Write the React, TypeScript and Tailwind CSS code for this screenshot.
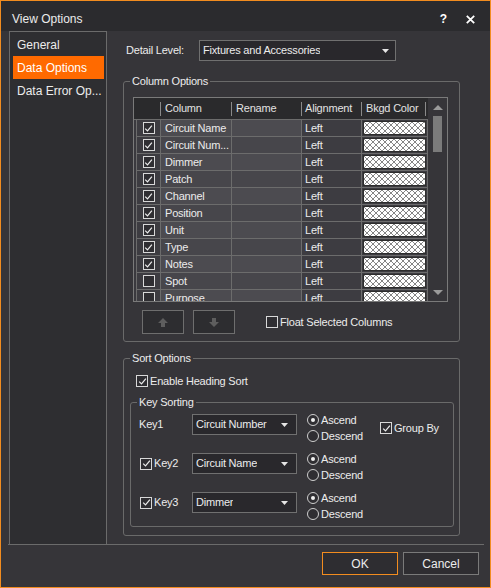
import React from "react";

function Check({ checked }: { checked: boolean }) {
  return (
    <span className="flex h-[12px] w-[12px] shrink-0 items-center justify-center border border-[#d8d8d8] bg-[#2f2e32]">
      {checked && (
        <svg width="9" height="9" viewBox="0 0 9 9">
          <path d="M1.2 4.6L3.5 6.9L7.9 1.6" fill="none" stroke="#ececec" strokeWidth="1.2" />
        </svg>
      )}
    </span>
  );
}

function Radio({ on }: { on: boolean }) {
  return (
    <span className="flex h-[12px] w-[12px] shrink-0 items-center justify-center rounded-full border border-[#cfcfcf] bg-[#2f2e32]">
      {on && <span className="h-[4px] w-[4px] rounded-full bg-[#f0f0f0]" />}
    </span>
  );
}

function Caret() {
  return (
    <svg width="7" height="4" viewBox="0 0 7 4" className="ml-auto shrink-0">
      <path d="M0 0H7L3.5 4Z" fill="#e6e6e6" />
    </svg>
  );
}

function Select({ text, className }: { text: string; className: string }) {
  return (
    <div className={className}>
      <span className="truncate">{text}</span>
      <Caret />
    </div>
  );
}

function Group({ label, className, children }: { label: string; className: string; children: React.ReactNode }) {
  return (
    <div className={className}>
      <span className="absolute left-[6px] top-[-8px] bg-[#363539] px-[2px] leading-[14px]">{label}</span>
      {children}
    </div>
  );
}

function Pattern({ id }: { id: string }) {
  return (
    <svg width="61" height="12" className="block">
      <defs>
        <pattern id={id} width="6" height="6" patternUnits="userSpaceOnUse">
          <rect width="6" height="6" fill="#ffffff" />
          <path d="M0 0L6 6M6 0L0 6" stroke="#858585" strokeWidth="1" />
        </pattern>
      </defs>
      <rect width="61" height="12" fill={`url(#${id})`} />
    </svg>
  );
}

const rows: [string, boolean][] = [
  ["Circuit Name", true],
  ["Circuit Num...", true],
  ["Dimmer", true],
  ["Patch", true],
  ["Channel", true],
  ["Position", true],
  ["Unit", true],
  ["Type", true],
  ["Notes", true],
  ["Spot", false],
  ["Purpose", false],
];

function KeyRow({ label, check, sel, groupBy }: { label: string; check: boolean; sel: string; groupBy?: boolean }) {
  return (
    <div className="flex h-[39px] items-start">
      <div className="mt-[2px] flex h-[21px] w-[61px] items-center gap-[2px] pl-[8px]">
        {check && (
          <span className="ml-[1px]">
            <Check checked />
          </span>
        )}
        <span>{label}</span>
      </div>
      <Select
        text={sel}
        className="mt-[2px] flex h-[21px] w-[105px] items-center border border-[#707070] bg-[#29282c] pl-[3px] pr-[8px]"
      />
      <div className="ml-[10px] flex w-[63px] flex-col">
        <div className="flex h-[16px] items-center gap-[2px]">
          <Radio on />
          <span>Ascend</span>
        </div>
        <div className="flex h-[16px] items-center gap-[2px]">
          <Radio on={false} />
          <span>Descend</span>
        </div>
      </div>
      {groupBy && (
        <div className="ml-[10px] flex h-[32px] items-center gap-[2px]">
          <Check checked />
          <span>Group By</span>
        </div>
      )}
    </div>
  );
}

export default function App() {
  return (
    <div className="h-[588px] w-[491px] overflow-hidden border border-[#f28c1f] bg-[#363539] font-['Liberation_Sans',Arial,sans-serif] text-[#ececec]">
      {/* title bar */}
      <div className="flex h-[30px] items-center bg-[#2b2b2e] pl-[11px] pr-[15px] pt-[6px] text-[12px]">
        <span>View Options</span>
        <span className="ml-auto font-bold text-white">?</span>
        <svg width="9" height="9" viewBox="0 0 9 9" className="ml-[19px]">
          <path d="M0.8 0.8L8.2 8.2M8.2 0.8L0.8 8.2" stroke="#ffffff" strokeWidth="1.8" />
        </svg>
      </div>

      {/* body */}
      <div className="flex h-[513px]">
        <nav className="ml-[8px] w-[98px] border-x border-t border-[#6b6b6b] bg-[#2e2e31] pl-[3px] pr-[2px] pt-[1px] text-[12px]">
          <div className="flex h-[23px] items-center pl-[4px]">General</div>
          <div className="flex h-[23px] items-center bg-[#ff6a00] pl-[4px] text-white">Data Options</div>
          <div className="flex h-[23px] items-center pl-[4px]">Data Error Op...</div>
        </nav>

        <div className="ml-[16px] w-[337px] text-[11px] tracking-[-0.2px]">
          <div className="mt-[9px] flex items-center">
            <span className="w-[76px] pl-[3px]">Detail Level:</span>
            <Select
              text="Fixtures and Accessories"
              className="flex h-[21px] w-[197px] items-center border border-[#707070] bg-[#29282c] pl-[3px] pr-[6px]"
            />
          </div>

          <Group label="Column Options" className="relative mt-[20px] h-[261px] rounded-[3px] border border-[#6a6a6a]">
            <div className="ml-[9px] mt-[15px] flex h-[205px] w-[315px] border border-[#7a7a7a] bg-[#363539]">
              <div className="w-[294px] overflow-hidden">
                <div className="flex h-[21px] items-center bg-[#2a2a2c] text-[#e2e2e2]">
                  <div className="flex h-full w-[27px] items-center justify-end">
                    <span className="h-[14px] w-px bg-[#8a8a8a]" />
                  </div>
                  <div className="flex h-full w-[71px] items-center pl-[4px]">
                    <span>Column</span>
                    <span className="ml-auto h-[14px] w-px bg-[#8a8a8a]" />
                  </div>
                  <div className="flex h-full w-[70px] items-center pl-[4px]">
                    <span>Rename</span>
                    <span className="ml-auto h-[14px] w-px bg-[#8a8a8a]" />
                  </div>
                  <div className="flex h-full w-[60px] items-center pl-[3px]">
                    <span>Alignment</span>
                    <span className="ml-auto h-[14px] w-px bg-[#8a8a8a]" />
                  </div>
                  <div className="flex h-full w-[66px] items-center pl-[4px]">
                    <span>Bkgd Color</span>
                    <span className="ml-auto mr-[2px] h-[14px] w-px bg-[#8a8a8a]" />
                  </div>
                </div>
                <div className="h-px bg-[#6c6c6c]" />
                {rows.map(([name, on], i) => (
                  <div key={name} className="flex h-[17px] bg-[#3a393e]">
                    <div className="w-[2px]" />
                    <div className="flex w-[25px] items-center justify-center border-x border-b border-[#6c6c6c] bg-[#3d3c41]">
                      <Check checked={on} />
                    </div>
                    <div
                      className={
                        i % 2 === 0
                          ? "flex w-[71px] items-center truncate border-b border-r border-[#6c6c6c] bg-[#4c4b50] pl-[4px]"
                          : "flex w-[71px] items-center truncate border-b border-r border-[#6c6c6c] bg-[#47464b] pl-[4px]"
                      }
                    >
                      {name}
                    </div>
                    <div
                      className={
                        i % 2 === 0
                          ? "w-[70px] border-b border-r border-[#6c6c6c] bg-[#4c4b50]"
                          : "w-[70px] border-b border-r border-[#6c6c6c] bg-[#47464b]"
                      }
                    />
                    <div className="flex w-[60px] items-center border-b border-r border-[#6c6c6c] bg-[#3d3c41] pl-[3px]">
                      Left
                    </div>
                    <div className="flex w-[66px] items-center border-b border-r border-[#6c6c6c] bg-[#3d3c41] pl-[1px]">
                      <div className="border border-[#2c2c2c]">
                        <Pattern id={`pat${i}`} />
                      </div>
                    </div>
                  </div>
                ))}
              </div>
              <div className="flex w-[19px] flex-col items-center pt-[7px]">
                <svg width="10" height="5" viewBox="0 0 10 5">
                  <path d="M0 5L5 0L10 5Z" fill="#9a9a9a" />
                </svg>
                <div className="mt-[6px] h-[36px] w-[9px] bg-[#7b7b7b]" />
                <svg width="10" height="5" viewBox="0 0 10 5" className="mb-[6px] mt-auto">
                  <path d="M0 0L5 5L10 0Z" fill="#9a9a9a" />
                </svg>
              </div>
            </div>

            <div className="ml-[18px] mt-[8px] flex items-center">
              <div className="flex h-[24px] w-[42px] items-center justify-center border border-[#6e6e6e] bg-[#2d2d30]">
                <svg width="10" height="9" viewBox="0 0 10 9">
                  <path d="M5 0L10 5H7V9H3V5H0Z" fill="#5e5e5e" />
                </svg>
              </div>
              <div className="ml-[9px] flex h-[24px] w-[42px] items-center justify-center border border-[#6e6e6e] bg-[#2d2d30]">
                <svg width="10" height="9" viewBox="0 0 10 9">
                  <path d="M3 0H7V4H10L5 9L0 4H3Z" fill="#5e5e5e" />
                </svg>
              </div>
              <div className="ml-[31px] flex items-center gap-[2px]">
                <Check checked={false} />
                <span>Float Selected Columns</span>
              </div>
            </div>
          </Group>

          <Group label="Sort Options" className="relative mt-[16px] h-[178px] rounded-[3px] border border-[#6a6a6a]">
            <div className="ml-[12px] mt-[14px] flex h-[16px] items-center gap-[2px]">
              <Check checked />
              <span>Enable Heading Sort</span>
            </div>
            <Group
              label="Key Sorting"
              className="relative ml-[6px] mt-[13px] h-[125px] w-[324px] rounded-[3px] border border-[#6a6a6a] pt-[9px]"
            >
              <KeyRow label="Key1" check={false} sel="Circuit Number" groupBy />
              <KeyRow label="Key2" check sel="Circuit Name" />
              <KeyRow label="Key3" check sel="Dimmer" />
            </Group>
          </Group>
        </div>
      </div>

      <div className="ml-[7px] h-px w-[476px] bg-[#6b6b6b]" />

      <div className="mt-[7px] flex justify-end gap-[5px] pr-[11px] text-[12px]">
        <div className="flex h-[23px] w-[76px] items-center justify-center border border-[#f28c1f] bg-[#2e2d31]">OK</div>
        <div className="flex h-[23px] w-[76px] items-center justify-center border border-[#7a7a7a] bg-[#2e2d31]">Cancel</div>
      </div>
    </div>
  );
}
